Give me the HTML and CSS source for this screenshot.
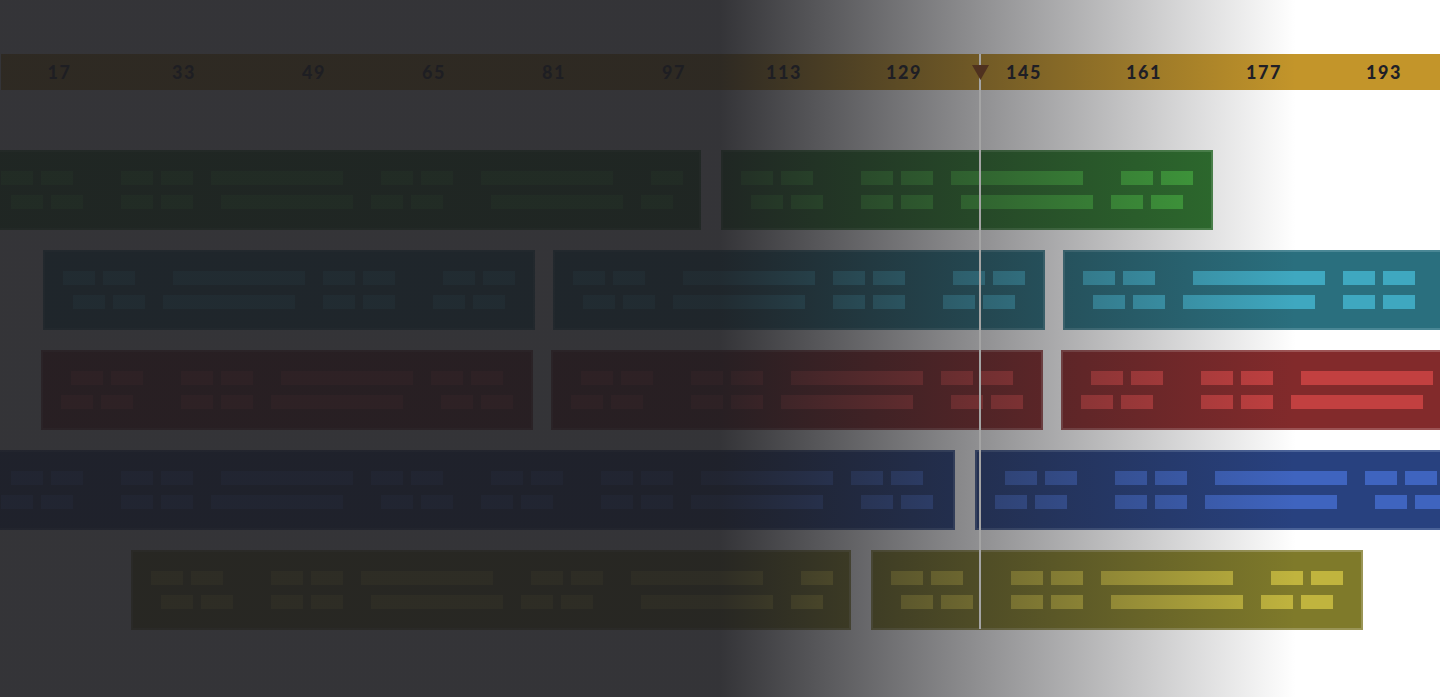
FILE: index.html
```html
<!DOCTYPE html>
<html lang="en">
<head>
<meta charset="utf-8">
<title>Timeline</title>
<link rel="stylesheet" href="styles.css">
</head>
<body>
<div class="stage">
  <div class="ruler">
    <span class="first">17</span><span>33</span><span class="nudge">49</span><span class="nudge">65</span><span class="nudge">81</span><span class="nudge">97</span><span>113</span><span>129</span><span>145</span><span>161</span><span>177</span><span>193</span>
  </div>

  <div class="tracks">
    <div class="track green">
      <div class="block w720">
        <div class="dashes"><span class="d m18"></span><span class="d m8"></span><span class="d m48"></span><span class="d m8"></span><span class="d l m18"></span><span class="d m38"></span><span class="d m8"></span><span class="d l m28"></span><span class="d m38"></span></div>
        <div class="dashes"><span class="d m28"></span><span class="d m8"></span><span class="d m38"></span><span class="d m8"></span><span class="d l m28"></span><span class="d m18"></span><span class="d m8"></span><span class="d l m48"></span><span class="d m18"></span></div>
      </div>
      <div class="block w492">
        <div class="dashes"><span class="d m18"></span><span class="d m8"></span><span class="d m48"></span><span class="d m8"></span><span class="d l m18"></span><span class="d m38"></span><span class="d m8"></span></div>
        <div class="dashes"><span class="d m28"></span><span class="d m8"></span><span class="d m38"></span><span class="d m8"></span><span class="d l m28"></span><span class="d m18"></span><span class="d m8"></span></div>
      </div>
    </div>

    <div class="track teal">
      <div class="block w492">
        <div class="dashes"><span class="d m18"></span><span class="d m8"></span><span class="d l m38"></span><span class="d m18"></span><span class="d m8"></span><span class="d m48"></span><span class="d m8"></span></div>
        <div class="dashes"><span class="d m28"></span><span class="d m8"></span><span class="d l m18"></span><span class="d m28"></span><span class="d m8"></span><span class="d m38"></span><span class="d m8"></span></div>
      </div>
      <div class="block w492">
        <div class="dashes"><span class="d m18"></span><span class="d m8"></span><span class="d l m38"></span><span class="d m18"></span><span class="d m8"></span><span class="d m48"></span><span class="d m8"></span></div>
        <div class="dashes"><span class="d m28"></span><span class="d m8"></span><span class="d l m18"></span><span class="d m28"></span><span class="d m8"></span><span class="d m38"></span><span class="d m8"></span></div>
      </div>
      <div class="block w492">
        <div class="dashes"><span class="d m18"></span><span class="d m8"></span><span class="d l m38"></span><span class="d m18"></span><span class="d m8"></span><span class="d m48"></span><span class="d m8"></span></div>
        <div class="dashes"><span class="d m28"></span><span class="d m8"></span><span class="d l m18"></span><span class="d m28"></span><span class="d m8"></span><span class="d m38"></span><span class="d m8"></span></div>
      </div>
    </div>

    <div class="track red">
      <div class="block w492">
        <div class="dashes"><span class="d m28"></span><span class="d m8"></span><span class="d m38"></span><span class="d m8"></span><span class="d l m28"></span><span class="d m18"></span><span class="d m8"></span></div>
        <div class="dashes"><span class="d m18"></span><span class="d m8"></span><span class="d m48"></span><span class="d m8"></span><span class="d l m18"></span><span class="d m38"></span><span class="d m8"></span></div>
      </div>
      <div class="block w492">
        <div class="dashes"><span class="d m28"></span><span class="d m8"></span><span class="d m38"></span><span class="d m8"></span><span class="d l m28"></span><span class="d m18"></span><span class="d m8"></span></div>
        <div class="dashes"><span class="d m18"></span><span class="d m8"></span><span class="d m48"></span><span class="d m8"></span><span class="d l m18"></span><span class="d m38"></span><span class="d m8"></span></div>
      </div>
      <div class="block w492">
        <div class="dashes"><span class="d m28"></span><span class="d m8"></span><span class="d m38"></span><span class="d m8"></span><span class="d l m28"></span><span class="d m18"></span><span class="d m8"></span></div>
        <div class="dashes"><span class="d m18"></span><span class="d m8"></span><span class="d m48"></span><span class="d m8"></span><span class="d l m18"></span><span class="d m38"></span><span class="d m8"></span></div>
      </div>
    </div>

    <div class="track blue">
      <div class="block w974">
        <div class="dashes"><span class="d m28"></span><span class="d m8"></span><span class="d m38"></span><span class="d m8"></span><span class="d l m28"></span><span class="d m18"></span><span class="d m8"></span><span class="d m48"></span><span class="d m8"></span><span class="d m38"></span><span class="d m8"></span><span class="d l m28"></span><span class="d m18"></span><span class="d m8"></span></div>
        <div class="dashes"><span class="d m18"></span><span class="d m8"></span><span class="d m48"></span><span class="d m8"></span><span class="d l m18"></span><span class="d m38"></span><span class="d m8"></span><span class="d m28"></span><span class="d m8"></span><span class="d m48"></span><span class="d m8"></span><span class="d l m18"></span><span class="d m38"></span><span class="d m8"></span></div>
      </div>
      <div class="block w492">
        <div class="dashes"><span class="d m28"></span><span class="d m8"></span><span class="d m38"></span><span class="d m8"></span><span class="d l m28"></span><span class="d m18"></span><span class="d m8"></span></div>
        <div class="dashes"><span class="d m18"></span><span class="d m8"></span><span class="d m48"></span><span class="d m8"></span><span class="d l m18"></span><span class="d m38"></span><span class="d m8"></span></div>
      </div>
    </div>

    <div class="track yellow">
      <div class="block w720">
        <div class="dashes"><span class="d m18"></span><span class="d m8"></span><span class="d m48"></span><span class="d m8"></span><span class="d l m18"></span><span class="d m38"></span><span class="d m8"></span><span class="d l m28"></span><span class="d m38"></span></div>
        <div class="dashes"><span class="d m28"></span><span class="d m8"></span><span class="d m38"></span><span class="d m8"></span><span class="d l m28"></span><span class="d m18"></span><span class="d m8"></span><span class="d l m48"></span><span class="d m18"></span></div>
      </div>
      <div class="block w492">
        <div class="dashes"><span class="d m18"></span><span class="d m8"></span><span class="d m48"></span><span class="d m8"></span><span class="d l m18"></span><span class="d m38"></span><span class="d m8"></span></div>
        <div class="dashes"><span class="d m28"></span><span class="d m8"></span><span class="d m38"></span><span class="d m8"></span><span class="d l m28"></span><span class="d m18"></span><span class="d m8"></span></div>
      </div>
    </div>
  </div>
</div>

<div class="shade"></div>

<div class="playhead">
  <svg class="head" width="17" height="15" viewBox="0 0 17 15"><polygon points="0,0 17,0 8.5,15" fill="#4f311f"/></svg>
</div>
</body>
</html>
```

FILE: styles.css
```css
html, body {
  margin: 0;
  height: 100%;
  overflow: hidden;
  background: #ffffff;
}

body {
  position: relative;
  font-family: Lato, "Open Sans", sans-serif;
}

.stage {
  padding-top: 54px;
  overflow: hidden;
}

/* ---------- ruler ---------- */
.ruler {
  margin-left: 1px;
  height: 36px;
  padding-left: 2px;
  background: #c3952a;
  display: grid;
  grid-template-columns: repeat(12, 120px);
  align-items: center;
  font-weight: 900;
  font-size: 18px;
  line-height: 1;
  letter-spacing: 1.5px;
  color: #1f1f27;
}

.ruler span {
  text-align: center;
  padding-left: 2px;
}

.ruler .nudge {
  padding-left: 22px;
}

.ruler .first {
  padding-left: 0;
  padding-right: 7px;
}

/* ---------- tracks ---------- */
.tracks {
  margin-top: 60px;
  display: flex;
  flex-direction: column;
  gap: 20px;
  overflow: hidden;
}

.track {
  display: flex;
  gap: 20px;
  height: 80px;
}

.track.green  { margin-left: -19px; }
.track.teal   { margin-left: 43px; gap: 18px; }
.track.red    { margin-left: 41px; gap: 18px; }
.track.blue   { margin-left: -19px; }
.track.yellow { margin-left: 131px; }

.block {
  flex: none;
  box-sizing: border-box;
  height: 80px;
  border: 2px solid;
  padding-top: 19px;
  display: flex;
  flex-direction: column;
  gap: 10px;
}

.w492 { width: 492px; }
.w720 { width: 720px; }
.w974 { width: 974px; }

.dashes {
  display: flex;
  height: 14px;
}

.d {
  flex: none;
  width: 32px;
  height: 14px;
}

.d.l { width: 132px; }

.m8  { margin-left: 8px; }
.m18 { margin-left: 18px; }
.m28 { margin-left: 28px; }
.m38 { margin-left: 38px; }
.m48 { margin-left: 48px; }

/* colours */
.green .block  { background: #2e722e; border-color: #4f8c4f; }
.green .d      { background: #43a93e; }

.teal .block   { background: #2a6f7e; border-color: #4a8795; }
.teal .d       { background: #3fa8c0; }

.red .block    { background: #822a2b; border-color: #9c5354; }
.red .d        { background: #c24040; }

.blue .block   { background: #28417f; border-color: #4a6298; }
.blue .d       { background: #3f64bf; }

.yellow .block { background: #7f7a2a; border-color: #9a9556; }
.yellow .d     { background: #c0b43e; }

/* ---------- dimming overlay ---------- */
.shade {
  position: absolute;
  inset: 0;
  pointer-events: none;
  background: linear-gradient(90deg,
    rgba(30, 30, 34, 0.9) 0%,
    rgba(30, 30, 34, 0.9) 50%,
    rgba(30, 30, 34, 0) 90%);
}

/* ---------- playhead ---------- */
.playhead {
  position: absolute;
  left: 979px;
  top: 54px;
  width: 2px;
  height: 575px;
  background: #a4a4a4;
}

.head {
  position: absolute;
  left: -7.5px;
  top: 11px;
  display: block;
}
```
